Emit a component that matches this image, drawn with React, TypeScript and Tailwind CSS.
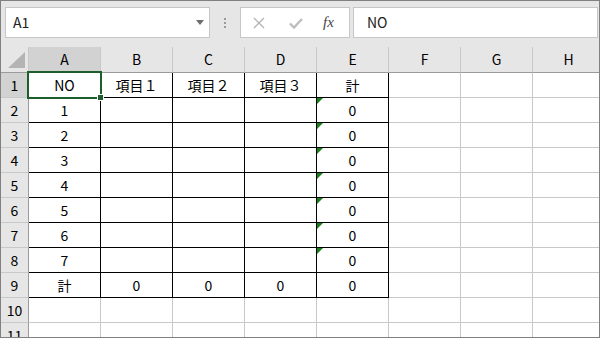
const font = { fontFamily: '"Noto Sans CJK JP", "Noto Sans", sans-serif' }

const cols = ['A', 'B', 'C', 'D', 'E', 'F', 'G', 'H']

// cell values for rows 1..9, columns A..E
const data: string[][] = [
  ['NO', '項目１', '項目２', '項目３', '計'],
  ['1', '', '', '', '0'],
  ['2', '', '', '', '0'],
  ['3', '', '', '', '0'],
  ['4', '', '', '', '0'],
  ['5', '', '', '', '0'],
  ['6', '', '', '', '0'],
  ['7', '', '', '', '0'],
  ['計', '0', '0', '0', '0'],
]

function Toolbar() {
  return (
    <div className="flex h-[46px] items-start bg-[#e6e6e6] pl-[4px] pr-[1px] pt-[6px]">
      <div className="flex h-[31px] w-[205px] items-center justify-between border border-[#c6c6c6] bg-white pl-[7px] pr-[5px] text-[14px] text-[#222]">
        <span>A1</span>
        <svg width="8" height="5" viewBox="0 0 8 5">
          <polygon points="0,0 8,0 4,5" fill="#6d6d6d" />
        </svg>
      </div>
      <div className="flex h-[31px] w-[30px] flex-col items-center justify-center gap-[2px]">
        <span className="h-[2px] w-[2px] bg-[#9a9a9a]" />
        <span className="h-[2px] w-[2px] bg-[#9a9a9a]" />
        <span className="h-[2px] w-[2px] bg-[#9a9a9a]" />
      </div>
      <div className="flex h-[31px] w-[110px] items-center border border-[#c6c6c6] bg-white pl-[12px]">
        <svg width="12" height="12" viewBox="0 0 12 12" className="mr-[24px]">
          <path d="M1 1 L11 11 M11 1 L1 11" stroke="#b4b4b4" strokeWidth="1.3" fill="none" />
        </svg>
        <svg width="14" height="12" viewBox="0 0 14 12" className="mr-[20px]">
          <path d="M1 6.5 L5 10.5 L13 2" stroke="#bdbdbd" strokeWidth="2.4" fill="none" />
        </svg>
        <span
          className="text-[15px] italic text-[#444]"
          style={{ fontFamily: '"Liberation Serif", serif' }}
        >
          fx
        </span>
      </div>
      <div className="ml-[3px] flex h-[31px] flex-1 items-center border border-[#c6c6c6] bg-white pl-[13px] text-[14px] text-[#222]">
        NO
      </div>
    </div>
  )
}

function Sheet() {
  return (
    <div className="relative grid grid-cols-[28px_repeat(8,72px)] grid-rows-[26px_repeat(11,25px)] text-[14px] text-black">
      {/* corner */}
      <div className="relative border-b border-r border-b-[#9b9b9b] border-r-[#c8c8c8] bg-[#e6e6e6]">
        <svg width="27" height="25" viewBox="0 0 27 25" className="absolute left-0 top-0">
          <polygon points="24,5 24,21 7,21" fill="#b4b4b4" />
        </svg>
      </div>
      {cols.map((c, i) => (
        <div
          key={c}
          className={`flex items-center justify-center border-b border-r border-b-[#9b9b9b] border-r-[#c8c8c8] ${
            i === 0 ? 'bg-[#d2d2d2]' : 'bg-[#e6e6e6]'
          }`}
        >
          {c}
        </div>
      ))}

      {Array.from({ length: 11 }, (_, r) => (
        <RowCells key={r} r={r} />
      ))}

      {/* active cell A1 */}
      <div className="pointer-events-none absolute left-[26px] top-[24px] h-[28px] w-[75px] border-2 border-[#1d5e2a]" />
      <div className="pointer-events-none absolute left-[97px] top-[48px] h-[5px] w-[5px] bg-[#1d5e2a] outline outline-1 outline-white" />
    </div>
  )
}

function RowCells({ r }: { r: number }) {
  const row = data[r]
  return (
    <>
      <div
        className={`flex items-center justify-center border-b border-r border-b-[#c8c8c8] border-r-[#9b9b9b] ${
          r === 0 ? 'bg-[#d2d2d2]' : 'bg-[#e6e6e6]'
        }`}
      >
        {r + 1}
      </div>
      {cols.map((c, ci) => {
        const inTable = row !== undefined && ci < 5
        const value = inTable ? row[ci] : ''
        const flag = ci === 4 && r >= 1 && r <= 7
        return (
          <div
            key={c}
            className={`relative flex items-center justify-center border-b border-r bg-white ${
              inTable ? 'border-black' : 'border-[#c8c8c8]'
            }`}
          >
            {flag && (
              <span className="absolute left-0 top-0 h-0 w-0 border-r-[6px] border-t-[6px] border-r-transparent border-t-[#1a7f1a]" />
            )}
            {value}
          </div>
        )
      })}
    </>
  )
}

export default function App() {
  return (
    <div
      className="box-border h-[338px] w-[600px] overflow-hidden border border-[#808080] bg-white"
      style={font}
    >
      <Toolbar />
      <Sheet />
    </div>
  )
}
